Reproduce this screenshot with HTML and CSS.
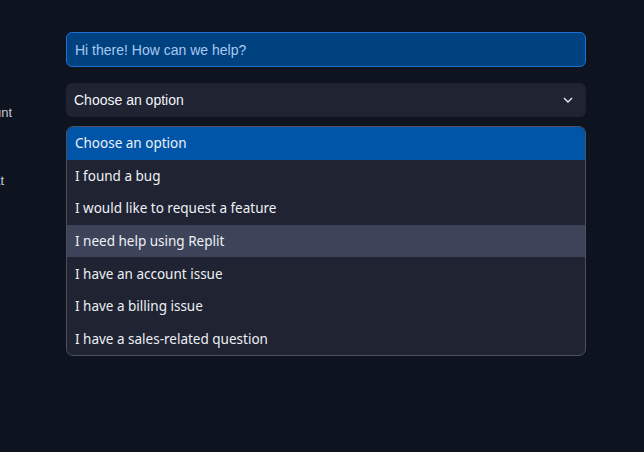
FILE: index.html
```html
<!DOCTYPE html>
<html>
<head>
<meta charset="utf-8">
<link rel="stylesheet" href="styles.css">
</head>
<body>
<div class="page">
  <aside class="side">
    <div class="side-item first"><span>Account</span></div>
    <div class="side-item second"><span>Chat</span></div>
  </aside>
  <main class="form">
    <div class="greeting">Hi there! How can we help?</div>
    <div class="select">
      <span>Choose an option</span>
      <svg class="chev" width="10" height="6" viewBox="0 0 10 6"><path d="M1 1l4 4 4-4" fill="none" stroke="#e8eaf0" stroke-width="1.4"/></svg>
    </div>
    <ul class="list">
      <li class="opt selected">Choose an option</li>
      <li class="opt">I found a bug</li>
      <li class="opt">I would like to request a feature</li>
      <li class="opt hover">I need help using Replit</li>
      <li class="opt">I have an account issue</li>
      <li class="opt">I have a billing issue</li>
      <li class="opt">I have a sales-related question</li>
    </ul>
  </main>
</div>
</body>
</html>
```

FILE: styles.css
```css
html, body {
  margin: 0;
  padding: 0;
  background: #0e1320;
  height: 100%;
}
.page {
  display: flex;
  height: 452px;
  overflow: hidden;
}
.side {
  width: 12px;
  flex: none;
  overflow: hidden;
  display: flex;
  flex-direction: column;
  padding-top: 102px;
  gap: 48px;
}
.side-item {
  display: flex;
  justify-content: flex-end;
  height: 20px;
  align-items: center;
  font-family: "Liberation Sans", Arial, sans-serif;
  font-size: 13px;
  color: #c2c6d0;
  white-space: nowrap;
}
.side-item.second {
  padding-right: 8px;
}
.form {
  margin-left: 54px;
  width: 520px;
  padding-top: 32px;
  display: flex;
  flex-direction: column;
}
.greeting {
  box-sizing: border-box;
  height: 35px;
  border: 1px solid #1f70d6;
  border-radius: 6px;
  background: #00417f;
  color: #a9c9f2;
  font-family: "Liberation Sans", Arial, sans-serif;
  font-size: 14px;
  display: flex;
  align-items: center;
  padding-left: 8px;
}
.select {
  margin-top: 16px;
  box-sizing: border-box;
  height: 34px;
  border-radius: 6px;
  background: #1f2332;
  color: #f2f4f8;
  font-family: "Liberation Sans", Arial, sans-serif;
  font-size: 14px;
  display: flex;
  align-items: center;
  justify-content: space-between;
  padding: 0 13px 0 8px;
}
.chev { display: block; }
.list {
  margin: 9px 0 0;
  padding: 0;
  list-style: none;
  box-sizing: border-box;
  border: 1px solid #4a4f62;
  border-radius: 7px;
  background: #1f2332;
  overflow: hidden;
}
.opt {
  height: 32.6px;
  display: flex;
  align-items: center;
  padding-left: 8px;
  font-family: "Noto Sans", "IBM Plex Sans", sans-serif;
  font-size: 13.5px;
  color: #eef0f5;
}
.opt.selected {
  background: #0055a8;
}
.opt.hover {
  background: #3d4459;
}
```
